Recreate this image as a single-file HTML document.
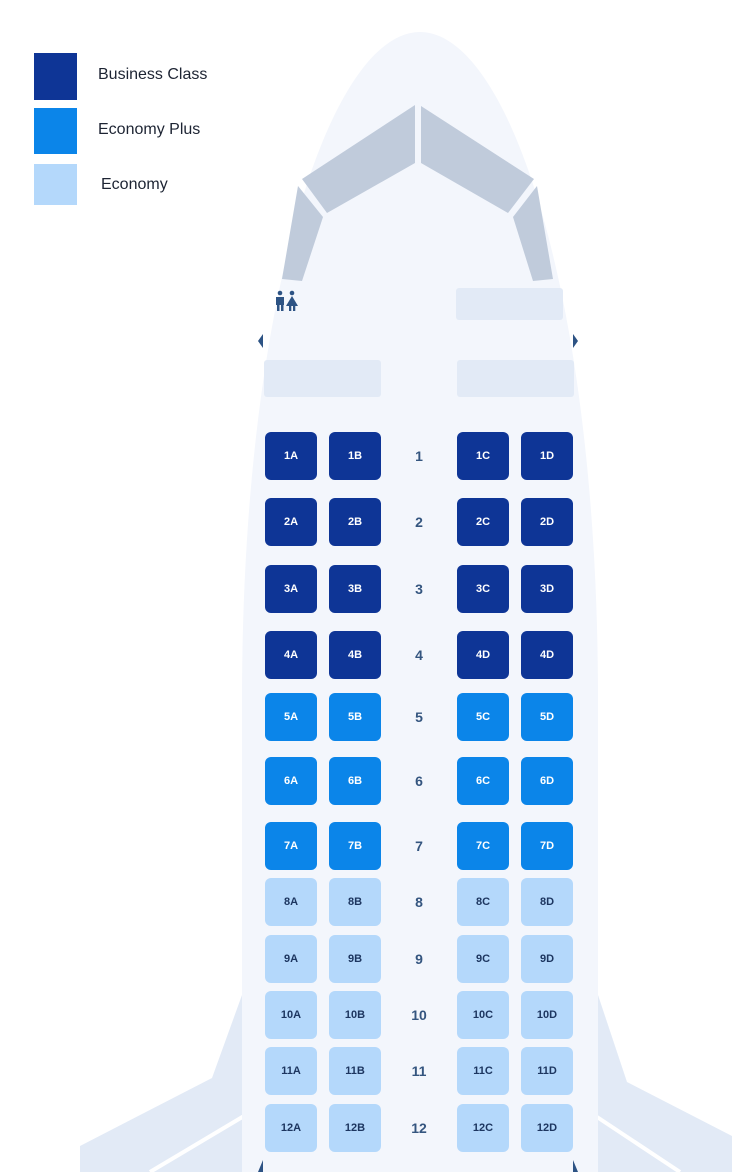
<!DOCTYPE html>
<html><head><meta charset="utf-8"><style>
body{margin:0;width:732px;height:1172px;overflow:hidden;background:#fff;font-family:"Liberation Sans",sans-serif;position:relative}
.lg{position:absolute;left:34px;width:43px}
.lt{position:absolute;left:98px;font-size:16px;color:#1d2433}
.s{position:absolute;width:52px;height:48px;border-radius:6px;display:flex;align-items:center;justify-content:center;font-size:11px;font-weight:bold}
.b{background:#0e3596;color:#fff}.p{background:#0b85e9;color:#fff}.e{background:#b4d8fb;color:#1d3660}
.n{position:absolute;width:40px;text-align:center;font-size:14px;font-weight:bold;color:#34557f}
svg{position:absolute;left:0;top:0}
</style></head><body>
<svg width="732" height="1172">
<path d="M242,995 L212,1078 L80,1146 L80,1172 L242,1172 Z" fill="#e2eaf6"/>
<path d="M598,995 L627,1082 L732,1136 L732,1172 L598,1172 Z" fill="#e2eaf6"/>
<path d="M150,1172 L244,1116 M597,1117 L680,1172" stroke="#fff" stroke-width="4"/>
<path d="M242,1172 L242,700 C242,300 330,32 420,32 C510,32 598,300 598,700 L598,1172 Z" fill="#f3f6fc"/>
<g fill="#c0cbdb">
<polygon points="415,105 415,163 327,213 302,179"/>
<polygon points="421,106 534,179 508,213 421,163"/>
<polygon points="298,186 323,217 302,281 282,279"/>
<polygon points="537,186 553,279 533,281 513,217"/>
</g>
<g fill="#e2eaf6">
<rect x="456" y="288" width="107" height="32" rx="3"/>
<rect x="264" y="360" width="117" height="37" rx="3"/>
<rect x="457" y="360" width="117" height="37" rx="3"/>
</g>
<g fill="#2d5384">
<polygon points="263,334 263,348 258,341"/><polygon points="573,334 573,348 578,341"/>
<polygon points="263,1160 263,1172 258,1172"/><polygon points="573,1160 573,1172 578,1172"/>
<circle cx="280" cy="293" r="2.3"/><rect x="276" y="297" width="8" height="8"/><rect x="277" y="304" width="2.5" height="7"/><rect x="281" y="304" width="2.5" height="7"/>
<circle cx="292" cy="293" r="2.3"/><polygon points="292,296 298,306 286,306"/><rect x="289" y="305" width="2.3" height="6"/><rect x="293" y="305" width="2.3" height="6"/>
</g>
</svg>
<div class="lg" style="top:53px;height:47px;background:#0e3596"></div>
<div class="lg" style="top:108px;height:46px;background:#0b85e9"></div>
<div class="lg" style="top:164px;height:41px;background:#b4d8fb"></div>
<div class="lt" style="top:66px">Business Class</div>
<div class="lt" style="top:121px">Economy Plus</div>
<div class="lt" style="top:176px;left:101px">Economy</div>
<div id="seats"></div>
<script>
var rows=[432,498,565,631,693,757,822,878,935,991,1047,1104];
var cols=[265,329,457,521],L=['A','B','C','D'],h='';
rows.forEach(function(y,i){var r=i+1,c=r<=4?'b':r<=7?'p':'e';
cols.forEach(function(x,j){var lab=r+L[j];if(r==4&&j==2)lab='4D';
h+='<div class="s '+c+'" style="left:'+x+'px;top:'+y+'px">'+lab+'</div>';});
h+='<div class="n" style="left:399px;top:'+(y+16)+'px">'+r+'</div>';});
document.getElementById('seats').innerHTML=h;
</script>
</body></html>
